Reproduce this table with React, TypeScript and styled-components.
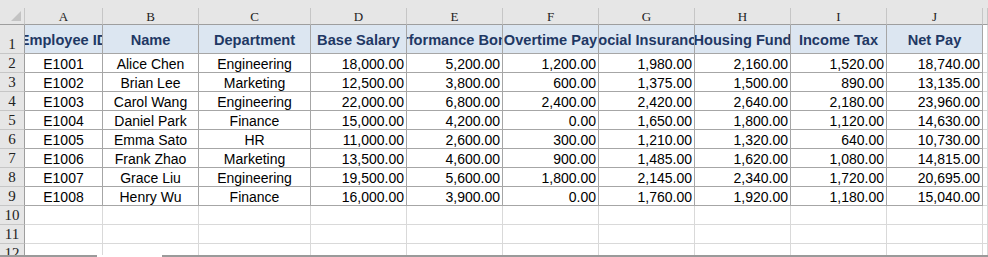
import React from 'react';
import styled, { createGlobalStyle } from 'styled-components';

const columns = ['A', 'B', 'C', 'D', 'E', 'F', 'G', 'H', 'I', 'J'];
const widths = [78, 96, 112, 96, 96, 96, 96, 96, 96, 96];

const headers = [
  'Employee ID',
  'Name',
  'Department',
  'Base Salary',
  'Performance Bonus',
  'Overtime Pay',
  'Social Insurance',
  'Housing Fund',
  'Income Tax',
  'Net Pay',
];

const rows = [
  ['E1001', 'Alice Chen', 'Engineering', 18000, 5200, 1200, 1980, 2160, 1520, 18740],
  ['E1002', 'Brian Lee', 'Marketing', 12500, 3800, 600, 1375, 1500, 890, 13135],
  ['E1003', 'Carol Wang', 'Engineering', 22000, 6800, 2400, 2420, 2640, 2180, 23960],
  ['E1004', 'Daniel Park', 'Finance', 15000, 4200, 0, 1650, 1800, 1120, 14630],
  ['E1005', 'Emma Sato', 'HR', 11000, 2600, 300, 1210, 1320, 640, 10730],
  ['E1006', 'Frank Zhao', 'Marketing', 13500, 4600, 900, 1485, 1620, 1080, 14815],
  ['E1007', 'Grace Liu', 'Engineering', 19500, 5600, 1800, 2145, 2340, 1720, 20695],
  ['E1008', 'Henry Wu', 'Finance', 16000, 3900, 0, 1760, 1920, 1180, 15040],
];

const emptyRows = [10, 11, 12];

const money = (n: number) =>
  n.toLocaleString('en-US', { minimumFractionDigits: 2, maximumFractionDigits: 2 });

const GlobalStyle = createGlobalStyle`
  html, body {
    margin: 0;
    padding: 0;
    background: #ffffff;
    overflow: hidden;
  }
`;

const Page = styled.div`
  width: 988px;
  height: 257px;
  display: flex;
  flex-direction: column;
  background: #ffffff;
  overflow: hidden;
`;

const TopBand = styled.div`
  height: 8px;
  flex: none;
  background: #e6e6e6;
`;

// the last row (12) is cut by the tab strip, as in the window
const Sheet = styled.div`
  height: 247px;
  flex: none;
  display: grid;
  grid-template-columns: 25px ${widths.map((w) => `${w}px`).join(' ')} 1fr;
  grid-template-rows: 17px 29px repeat(11, 19px);
  align-content: start;
  overflow: hidden;
  font-family: 'Liberation Sans', Arial, sans-serif;
  font-size: 14px;
  color: #000000;
`;

const Corner = styled.div`
  position: relative;
  background: #e6e6e6;
  border-right: 1px solid #c6c6c6;
  border-bottom: 1px solid #9e9e9e;
  &:after {
    content: '';
    position: absolute;
    right: 3px;
    bottom: 3px;
    width: 0;
    height: 0;
    border-left: 10px solid transparent;
    border-bottom: 10px solid #c3c3c3;
  }
`;

const ColHead = styled.div`
  background: #e6e6e6;
  border-right: 1px solid #c6c6c6;
  border-bottom: 1px solid #9e9e9e;
  display: flex;
  align-items: center;
  justify-content: center;
  font-family: 'Liberation Serif', 'DejaVu Serif', serif;
  font-size: 13px;
  color: #222222;
  padding-top: 1px;
`;

const RowHead = styled.div`
  background: #e6e6e6;
  border-right: 1px solid #9e9e9e;
  border-bottom: 1px solid #c6c6c6;
  display: flex;
  align-items: flex-end;
  justify-content: center;
  font-family: 'Liberation Serif', 'DejaVu Serif', serif;
  font-size: 15px;
  line-height: 17px;
  color: #222222;
  overflow: hidden;
`;

const HeadCell = styled.div`
  background: #dce6f1;
  border-right: 1px solid #a6a6a6;
  border-bottom: 1px solid #a6a6a6;
  display: flex;
  align-items: center;
  justify-content: center;
  padding-top: 2px;
  overflow: hidden;
  white-space: nowrap;
  font-weight: bold;
  font-size: 14.6px;
  color: #1f3864;
`;

const DataCell = styled.div<{ $align: 'center' | 'right' }>`
  border-right: 1px solid #a6a6a6;
  border-bottom: 1px solid #a6a6a6;
  display: flex;
  align-items: center;
  justify-content: ${(p) => (p.$align === 'right' ? 'flex-end' : 'center')};
  padding: 2px 2px 0;
  white-space: nowrap;
  overflow: hidden;
  line-height: 17px;
`;

const EmptyCell = styled.div`
  border-right: 1px solid #d9d9d9;
  border-bottom: 1px solid #d9d9d9;
`;

const TabStrip = styled.div`
  height: 2px;
  flex: none;
  display: flex;
  background: #9a9a9a;
`;

const ActiveTab = styled.div`
  margin-left: 97px;
  width: 65px;
  background: #ffffff;
`;

const App: React.FC = () => {
  return (
    <Page>
      <GlobalStyle />
      <TopBand />
      <Sheet>
        <Corner />
        {columns.map((c) => (
          <ColHead key={c}>{c}</ColHead>
        ))}
        <ColHead />

        <RowHead>1</RowHead>
        {headers.map((h) => (
          <HeadCell key={h}>{h}</HeadCell>
        ))}
        <EmptyCell />

        {rows.map((r, i) => (
          <React.Fragment key={r[0] as string}>
            <RowHead>{i + 2}</RowHead>
            {r.map((v, j) => (
              <DataCell key={j} $align={typeof v === 'number' ? 'right' : 'center'}>
                {typeof v === 'number' ? money(v) : v}
              </DataCell>
            ))}
            <EmptyCell />
          </React.Fragment>
        ))}

        {emptyRows.map((n) => (
          <React.Fragment key={n}>
            <RowHead>{n}</RowHead>
            {columns.map((c) => (
              <EmptyCell key={c} />
            ))}
            <EmptyCell />
          </React.Fragment>
        ))}
      </Sheet>
      <TabStrip>
        <ActiveTab />
      </TabStrip>
    </Page>
  );
};

export default App;
